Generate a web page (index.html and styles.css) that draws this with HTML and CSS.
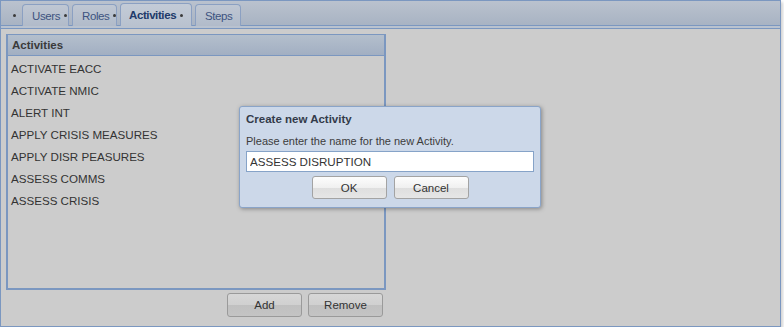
FILE: index.html
```html
<!DOCTYPE html>
<html lang="en">
<head>
    <meta charset="UTF-8">
    <title>Activities</title>
    <link rel="stylesheet" href="styles.css">
</head>
<body>
    <div class="window">
        <div class="tab-bar">
            <div class="tab tab-blank"><span class="dot"></span></div>
            <div class="tab tab-users">Users<span class="dot"></span></div>
            <div class="tab tab-roles">Roles<span class="dot"></span></div>
            <div class="tab tab-activities selected">Activities<span class="dot"></span></div>
            <div class="tab tab-steps">Steps</div>
        </div>
        <div class="tab-strip"></div>

        <div class="content">
            <div class="panel">
                <div class="panel-header">Activities</div>
                <ul class="list">
                    <li>ACTIVATE EACC</li>
                    <li>ACTIVATE NMIC</li>
                    <li>ALERT INT</li>
                    <li>APPLY CRISIS MEASURES</li>
                    <li>APPLY DISR PEASURES</li>
                    <li>ASSESS COMMS</li>
                    <li>ASSESS CRISIS</li>
                </ul>
            </div>
            <div class="actions">
                <button class="btn">Add</button>
                <button class="btn">Remove</button>
            </div>
        </div>

        <!-- modal dialog -->
        <div class="dialog">
            <div class="dialog-title">Create new Activity</div>
            <div class="dialog-text">Please enter the name for the new Activity.</div>
            <input class="dialog-input" type="text" value="ASSESS DISRUPTION">
            <div class="dialog-buttons">
                <button class="btn btn-light">OK</button>
                <button class="btn btn-light">Cancel</button>
            </div>
        </div>
    </div>
</body>
</html>
```

FILE: styles.css
```css
/* Page */
body {
    margin: 0;
    background-color: #fff;
    font-family: 'Liberation Sans', Arial, sans-serif;
    color: #333;
}

.window {
    position: relative;
    box-sizing: border-box;
    width: 781px;
    height: 327px;
    border: 1px solid #7b97c0;
    background-color: #cccccc;
    box-shadow: 2px 2px 3px rgba(0, 0, 0, 0.18);
}

/* Tabs */
.tab-bar {
    display: flex;
    align-items: flex-end;
    gap: 3px;
    height: 24px;
    padding-left: 5px;
    background: linear-gradient(#bac2ce, #a8b3c3);
    border-bottom: 1px solid #7b97c0;
}

.tab {
    box-sizing: border-box;
    display: flex;
    align-items: center;
    height: 22px;
    margin-bottom: -1px;
    padding-left: 9px;
    border: 1px solid #8ba0c2;
    border-bottom: none;
    border-radius: 4px 4px 0 0;
    background: linear-gradient(#bfc7d3, #b1bbca);
    font-size: 11.5px;
    letter-spacing: -0.4px;
    color: #3d5380;
}

.tab-blank {
    width: 13px;
    padding: 0;
    justify-content: flex-end;
    border-color: transparent;
    background: none;
}

.tab-users { width: 47px; }
.tab-roles { width: 45px; }
.tab-activities { width: 72px; }
.tab-steps { width: 46px; }

.tab.selected {
    height: 23px;
    padding-left: 8px;
    background: linear-gradient(#c3cbd7, #b9c2cf);
    font-weight: bold;
    color: #213a6a;
}

.dot {
    width: 3px;
    height: 3px;
    margin-left: 4px;
    border-radius: 50%;
    background-color: #3b3b3b;
}

.tab-blank .dot {
    margin: 0 2px 0 0;
}

.tab-strip {
    height: 2px;
    background-color: #b9c2cf;
    border-bottom: 1px solid #7b97c0;
}

/* Activities panel */
.content {
    padding: 5px 0 0 5px;
    width: 380px;
}

.panel {
    box-sizing: border-box;
    height: 256px;
    border: 2px solid #7b97c0;
    border-top-width: 1px;
    display: flex;
    flex-direction: column;
}

.panel-header {
    height: 20px;
    line-height: 20px;
    padding-left: 4px;
    background: linear-gradient(#b4bfcc, #a2afc2);
    border-bottom: 1px solid #7b97c0;
    font-size: 11.5px;
    font-weight: bold;
    color: #3a3a3a;
}

.list {
    list-style: none;
    margin: 0;
    padding: 2px 0 0 0;
}

.list li {
    height: 22px;
    line-height: 22px;
    padding-left: 3px;
    font-size: 11.6px;
    color: #333;
}

.actions {
    display: flex;
    justify-content: flex-end;
    gap: 6px;
    margin-top: 3px;
    padding-right: 3px;
}

/* Buttons */
.btn {
    box-sizing: border-box;
    width: 75px;
    height: 24px;
    padding: 0;
    border: 1px solid #9a9a9a;
    border-radius: 3px;
    background: linear-gradient(#d7d7d7 0%, #d0d0d0 50%, #c0c0c0 51%, #c4c4c4 100%);
    font-family: 'Liberation Sans', Arial, sans-serif;
    font-size: 11.5px;
    color: #333;
}

.btn-light {
    height: 23px;
    border-color: #a3a3a3;
    background: linear-gradient(#fdfdfd 0%, #f0f0f0 50%, #dedede 51%, #e6e6e6 100%);
}

/* Dialog */
.dialog {
    position: absolute;
    left: 238px;
    top: 105px;
    box-sizing: border-box;
    width: 302px;
    height: 102px;
    padding: 6px 6px 0 6px;
    border: 1px solid #8aa4c8;
    border-radius: 3px;
    background-color: #ccd8e9;
    box-shadow: 1px 1px 4px rgba(0, 0, 0, 0.35);
}

.dialog-title {
    font-size: 11.5px;
    font-weight: bold;
    color: #333b4a;
    line-height: 13px;
}

.dialog-text {
    margin-top: 9px;
    font-size: 11px;
    color: #3c3c3c;
    line-height: 13px;
}

.dialog-input {
    display: block;
    box-sizing: border-box;
    width: 288px;
    height: 21px;
    margin-top: 3px;
    padding: 0 3px;
    border: 1px solid #86a3c8;
    background-color: #fff;
    font-family: 'Liberation Sans', Arial, sans-serif;
    font-size: 11.6px;
    color: #333;
    outline: none;
}

.dialog-buttons {
    display: flex;
    justify-content: center;
    gap: 7px;
    margin-top: 4px;
}
```
